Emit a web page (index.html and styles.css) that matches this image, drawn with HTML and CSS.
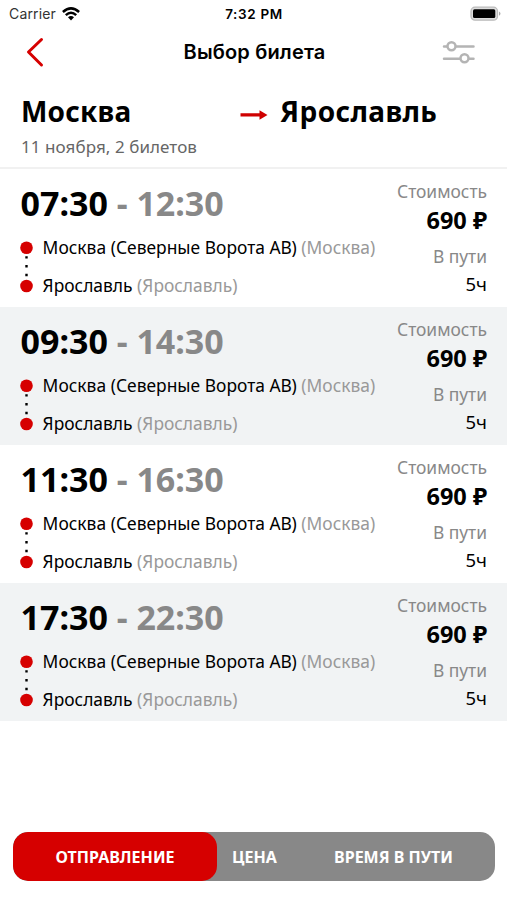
FILE: index.html
```html
<!DOCTYPE html>
<html lang="ru">
<head>
<meta charset="utf-8">
<title>Выбор билета</title>
<link rel="stylesheet" href="styles.css">
</head>
<body>
<div class="status">
  <div class="carrier"><span>Carrier</span>
    <svg width="18" height="14" viewBox="0 0 18 14" fill="none" stroke="#000" stroke-width="2.5"><path d="M.9 5Q9-2.2 17.100 5M3.800 8.200Q9 3.400 14.200 8.200"/><path d="M6 10.200Q9 7.800 12 10.200L9 13.400Z" fill="#000" stroke="none"/></svg>
  </div>
  <span class="clock">7:32 PM</span>
  <svg class="battery" width="32" height="16" viewBox="0 0 32 16"><rect x="1" y="1.200" width="26.500" height="13" rx="4" fill="#ddd" stroke="#bbb" stroke-width="1.300"/><rect x="3" y="3.300" width="22.300" height="8.700" rx="1.500"/><path d="M29 5.500Q32 7.500 29 9.800Z" fill="#aaa"/></svg>
</div>
<header class="nav">
  <svg class="back" width="20" height="32" viewBox="0 0 20 32" fill="none" stroke="#d60000" stroke-width="3" stroke-linecap="round" stroke-linejoin="round"><path d="M16.500 3.500L3.500 16L16.500 29"/></svg>
  <h1>Выбор билета</h1>
  <svg class="filter" width="34" height="26" viewBox="0 0 34 26" fill="#fff" stroke="#b4b4b4" stroke-width="2.500" stroke-linecap="round"><path d="M2 7.500H31.500M2 19.800H31.500"/><circle cx="9.500" cy="7.200" r="4"/><circle cx="22.500" cy="19.300" r="4"/></svg>
</header>
<section class="route">
  <div class="cities">
    <span class="from">Москва</span>
    <svg class="arrow" width="28" height="12" viewBox="0 0 28 12"><path d="M.5 4.300H19.500V1.300L27.500 6L19.500 10.700V7.500H.5Z" fill="#cf0000"/></svg>
    <span class="to">Ярославль</span>
  </div>
  <p class="date">11 ноября, 2 билетов</p>
</section>
<main>
  <article class="trip">
    <div class="info">
      <div class="time">07:30 <span>- 12:30</span></div>
      <div class="stops">
        <svg class="track" width="14" height="62" viewBox="0 0 14 62"><g fill="#d60000"><circle cx="6.500" cy="11.700" r="6.300"/><circle cx="6.500" cy="50" r="6.300"/></g><path d="M5.300 20.200h2.400v2.400H5.300ZM5.300 29h2.400v2.400H5.300ZM5.300 37.800h2.400v2.400H5.300Z"/></svg>
        <div class="names"><div class="first">Москва (Северные Ворота АВ) <span>(Москва)</span></div><div>Ярославль <span>(Ярославль)</span></div></div>
      </div>
    </div>
    <div class="cost"><div class="label">Стоимость</div><div class="price">690 ₽</div><div class="label">В пути</div><div class="hours">5ч</div></div>
  </article>
  <article class="trip">
    <div class="info">
      <div class="time">09:30 <span>- 14:30</span></div>
      <div class="stops">
        <svg class="track" width="14" height="62" viewBox="0 0 14 62"><g fill="#d60000"><circle cx="6.500" cy="11.700" r="6.300"/><circle cx="6.500" cy="50" r="6.300"/></g><path d="M5.300 20.200h2.400v2.400H5.300ZM5.300 29h2.400v2.400H5.300ZM5.300 37.800h2.400v2.400H5.300Z"/></svg>
        <div class="names"><div class="first">Москва (Северные Ворота АВ) <span>(Москва)</span></div><div>Ярославль <span>(Ярославль)</span></div></div>
      </div>
    </div>
    <div class="cost"><div class="label">Стоимость</div><div class="price">690 ₽</div><div class="label">В пути</div><div class="hours">5ч</div></div>
  </article>
  <article class="trip">
    <div class="info">
      <div class="time">11:30 <span>- 16:30</span></div>
      <div class="stops">
        <svg class="track" width="14" height="62" viewBox="0 0 14 62"><g fill="#d60000"><circle cx="6.500" cy="11.700" r="6.300"/><circle cx="6.500" cy="50" r="6.300"/></g><path d="M5.300 20.200h2.400v2.400H5.300ZM5.300 29h2.400v2.400H5.300ZM5.300 37.800h2.400v2.400H5.300Z"/></svg>
        <div class="names"><div class="first">Москва (Северные Ворота АВ) <span>(Москва)</span></div><div>Ярославль <span>(Ярославль)</span></div></div>
      </div>
    </div>
    <div class="cost"><div class="label">Стоимость</div><div class="price">690 ₽</div><div class="label">В пути</div><div class="hours">5ч</div></div>
  </article>
  <article class="trip">
    <div class="info">
      <div class="time">17:30 <span>- 22:30</span></div>
      <div class="stops">
        <svg class="track" width="14" height="62" viewBox="0 0 14 62"><g fill="#d60000"><circle cx="6.500" cy="11.700" r="6.300"/><circle cx="6.500" cy="50" r="6.300"/></g><path d="M5.300 20.200h2.400v2.400H5.300ZM5.300 29h2.400v2.400H5.300ZM5.300 37.800h2.400v2.400H5.300Z"/></svg>
        <div class="names"><div class="first">Москва (Северные Ворота АВ) <span>(Москва)</span></div><div>Ярославль <span>(Ярославль)</span></div></div>
      </div>
    </div>
    <div class="cost"><div class="label">Стоимость</div><div class="price">690 ₽</div><div class="label">В пути</div><div class="hours">5ч</div></div>
  </article>
</main>
<footer class="sort">
  <button class="active">ОТПРАВЛЕНИЕ</button>
  <button class="by-price">ЦЕНА</button>
  <button class="by-time">ВРЕМЯ В ПУТИ</button>
</footer>
</body>
</html>
```
FILE: styles.css
```css
* { box-sizing: border-box; }
body {
  margin: 0;
  height: 900px;
  display: flex;
  flex-direction: column;
  background: #fff;
  color: #000;
  font-family: "Noto Sans", sans-serif;
  overflow: hidden;
}
svg { display: block; flex: none; }
h1, p { margin: 0; }

.status {
  height: 28px;
  display: grid;
  grid-template-columns: 1fr auto 1fr;
  align-items: center;
  padding: 0 5px 0 6px;
  font: 14px/28px Inter, sans-serif;
}
.carrier { display: flex; align-items: center; gap: 6px; padding-left: 3px; color: #333; letter-spacing: .15px; }
.clock { font-weight: 600; font-size: 13.5px; letter-spacing: .65px; }
.battery { justify-self: end; }

.nav {
  height: 52px;
  display: grid;
  grid-template-columns: 80px 1fr 80px;
  align-items: center;
  padding: 0 0 4px;
}
.back { margin-left: 25px; }
.nav h1 {
  padding-left: 2px;
  text-align: center;
  font: 600 20px/28px Inter, sans-serif;
  letter-spacing: .17px;
}
.filter { justify-self: end; margin-right: 31px; }

.route {
  height: 89px;
  padding: 13px 21px 0;
  border-bottom: 2px solid #f1f1f1;
}
.cities {
  display: flex;
  align-items: center;
  height: 36px;
  font-weight: 700;
  font-size: 28px;
  line-height: 36px;
}
.from { width: 219px; letter-spacing: .2px; }
.to { margin-left: 12px; letter-spacing: .4px; }
.arrow { margin-top: 7px; }
.date {
  margin-top: 6px;
  font-size: 17px;
  line-height: 24px;
  letter-spacing: .07px;
  color: #666;
}

.trip {
  height: 138px;
  display: flex;
  justify-content: space-between;
  padding: 0 20px 0 20px;
}
.trip:nth-child(even) { background: #f1f3f4; }
.time {
  margin-top: 12px;
  padding-left: .5px;
  font-weight: 700;
  font-size: 34px;
  line-height: 44px;
  white-space: nowrap;
}
.time span, .label { color: #888; }
.stops {
  display: flex;
  gap: 8.6px;
  margin-top: 10px;
  font-size: 17.4px;
  line-height: 24px;
  white-space: nowrap;
}
.track { margin-top: 1px; }
.first { margin-bottom: 14px; letter-spacing: .02px; }
.names span { color: #999; }
.cost { padding-top: 10px; text-align: right; }
.label { font-size: 17.4px; line-height: 24px; }
.price {
  margin: 1px 0 8px;
  font-weight: 700;
  font-size: 23.5px;
  line-height: 32px;
}
.hours { margin-top: 4px; font-size: 18.5px; line-height: 24px; }

.sort {
  display: grid;
  grid-template-columns: 204px 75px 1fr;
  height: 49px;
  margin: auto 12px 19px 13px;
  border-radius: 15px;
  background: #888;
  overflow: hidden;
}
.sort button {
  border: 0;
  padding: 1px 0 0;
  background: none;
  color: #fff;
  font: 700 16px/48px "Noto Sans", sans-serif;
}
.sort .active { background: #d60000; border-radius: 15px; }
```
